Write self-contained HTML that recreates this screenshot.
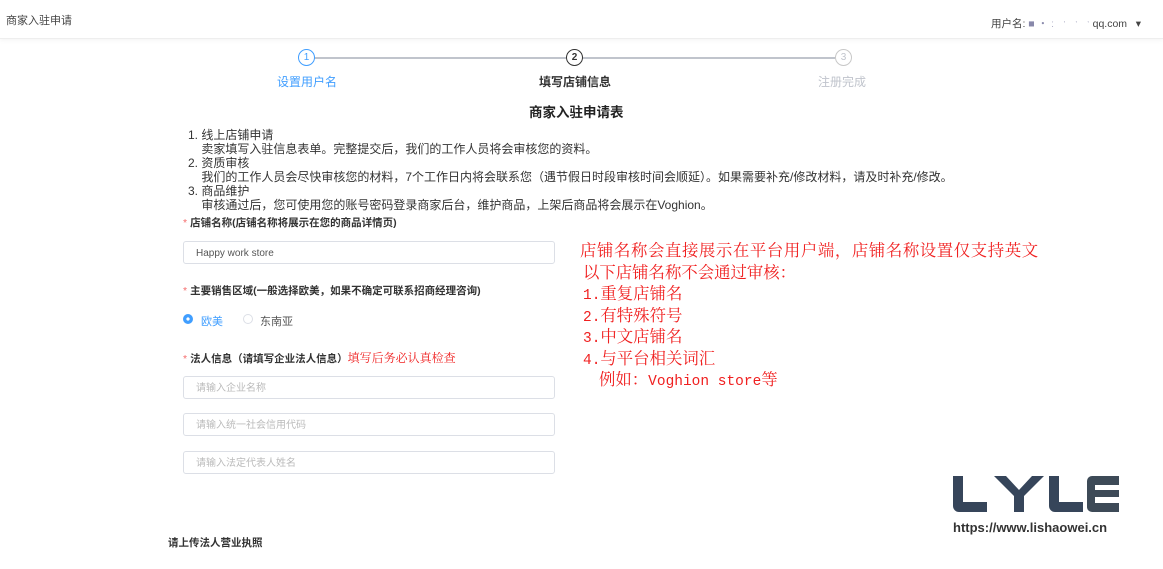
<!DOCTYPE html>
<html><head><meta charset="utf-8"><style>
body{margin:0;width:1163px;height:569px;background:#fff;font-family:"Liberation Sans","Noto Sans CJK SC",sans-serif;position:relative;overflow:hidden;color:#333}
.a{position:absolute;white-space:nowrap}
.hdr{position:absolute;left:0;top:0;width:1163px;height:38px;border-bottom:1px solid #eee;box-shadow:0 2px 4px rgba(0,0,0,.04)}
.c{position:absolute;width:15px;height:15px;border-radius:50%;border:1.5px solid;font-size:10px;text-align:center;line-height:15px;background:#fff}
.in{position:absolute;left:183px;width:372px;height:23px;border:1px solid #dcdfe6;border-radius:3px;font-size:10px;color:#bbb;line-height:23px;text-indent:12px;box-sizing:border-box}
.lb{font-size:10.5px;font-weight:bold;color:#333}
.lb b{color:#f56c6c;font-weight:normal;margin-right:3px}
.r{font-family:"Noto Serif CJK SC",serif;color:#f02020;font-size:16.4px}
.r div{height:21.5px;line-height:21.5px}
.m{font-family:"Liberation Mono",monospace;font-size:14.5px}
.li{font-size:12px;color:#333;line-height:14px}
</style></head><body>
<div class="hdr"></div>
<div class="a" style="left:6px;top:12px;font-size:11px;color:#444">商家入驻申请</div>
<div class="a" style="left:991px;top:16px;font-size:10.5px;color:#444">用户名: <span style="color:#88a;letter-spacing:3px">■‧ː ˑ ˑ ˑ</span>qq.com &nbsp;&nbsp;▾</div>
<div class="a" style="left:314px;top:57px;width:252px;height:2px;background:#c0c4cc"></div>
<div class="a" style="left:582px;top:57px;width:253px;height:2px;background:#c0c4cc"></div>
<div class="c" style="left:298px;top:49px;border-color:#409eff;color:#409eff">1</div>
<div class="c" style="left:566px;top:49px;border-color:#333;color:#333;font-weight:bold">2</div>
<div class="c" style="left:835px;top:49px;border-color:#c8c8c8;color:#c0c4cc">3</div>
<div class="a" style="left:277px;top:73px;font-size:12px;color:#409eff">设置用户名</div>
<div class="a" style="left:539px;top:73px;font-size:12px;color:#333;font-weight:bold">填写店铺信息</div>
<div class="a" style="left:818px;top:73px;font-size:12px;color:#c0c4cc">注册完成</div>
<div class="a" style="left:529px;top:101px;font-size:13.5px;font-weight:bold;color:#222">商家入驻申请表</div>
<div class="a li" style="left:188px;top:128px">1. 线上店铺申请<br>&nbsp;&nbsp;&nbsp; 卖家填写入驻信息表单。完整提交后，我们的工作人员将会审核您的资料。<br>2. 资质审核<br>&nbsp;&nbsp;&nbsp; 我们的工作人员会尽快审核您的材料，7个工作日内将会联系您（遇节假日时段审核时间会顺延）。如果需要补充/修改材料，请及时补充/修改。<br>3. 商品维护<br>&nbsp;&nbsp;&nbsp; 审核通过后，您可使用您的账号密码登录商家后台，维护商品，上架后商品将会展示在Voghion。</div>
<div class="a lb" style="left:183px;top:215px"><b>*</b>店铺名称(店铺名称将展示在您的商品详情页)</div>
<div class="in" style="top:241px;color:#555">Happy work store</div>
<div class="a lb" style="left:183px;top:283px"><b>*</b>主要销售区域(一般选择欧美，如果不确定可联系招商经理咨询)</div>
<div class="a" style="left:183px;top:314px;width:8px;height:8px;border-radius:50%;border:1px solid #409eff;background:radial-gradient(#fff 28%,#409eff 32%)"></div>
<div class="a" style="left:201px;top:313px;font-size:11px;color:#409eff">欧美</div>
<div class="a" style="left:243px;top:314px;width:8px;height:8px;border-radius:50%;border:1px solid #dcdfe6"></div>
<div class="a" style="left:260px;top:313px;font-size:11px;color:#555">东南亚</div>
<div class="a lb" style="left:183px;top:349px"><b>*</b>法人信息（请填写企业法人信息）<span class="r" style="font-size:12px;font-weight:normal">填写后务必认真检查</span></div>
<div class="in" style="top:376px">请输入企业名称</div>
<div class="in" style="top:413px">请输入统一社会信用代码</div>
<div class="in" style="top:451px">请输入法定代表人姓名</div>
<div class="a lb" style="left:168px;top:535px;font-size:10.5px">请上传法人营业执照</div>
<div class="a r" style="left:580px;top:239px">
<div style="letter-spacing:0.6px">店铺名称会直接展示在平台用户端，店铺名称设置仅支持英文</div>
<div style="padding-left:3px">以下店铺名称不会通过审核：</div>
<div style="padding-left:3px"><span class="m">1.</span>重复店铺名</div>
<div style="padding-left:3px"><span class="m">2.</span>有特殊符号</div>
<div style="padding-left:3px"><span class="m">3.</span>中文店铺名</div>
<div style="padding-left:3px"><span class="m">4.</span>与平台相关词汇</div>
<div style="padding-left:19px">例如：<span class="m">Voghion store</span>等</div>
</div>
<svg class="a" style="left:950px;top:472px" width="175" height="42" viewBox="0 0 175 42">
<g fill="#36455a">
<path d="M3 4h10v26h24v10H9a6 6 0 0 1-6-6z"/>
<path d="M44 4h12l13 14 13-14h12L74 24v16H64V24z"/>
<path d="M99 4h10v26h24v10h-28a6 6 0 0 1-6-6z"/>
<path d="M144 4h25v9h-24v5h24v7h-24v6h24v9h-27a5 5 0 0 1-5-5V9a5 5 0 0 1 5-5z" fill="#3d4a57"/>
</g></svg>
<div class="a" style="left:953px;top:520px;font-size:13px;font-weight:bold;color:#333">https://www.lishaowei.cn</div>
</body></html>
